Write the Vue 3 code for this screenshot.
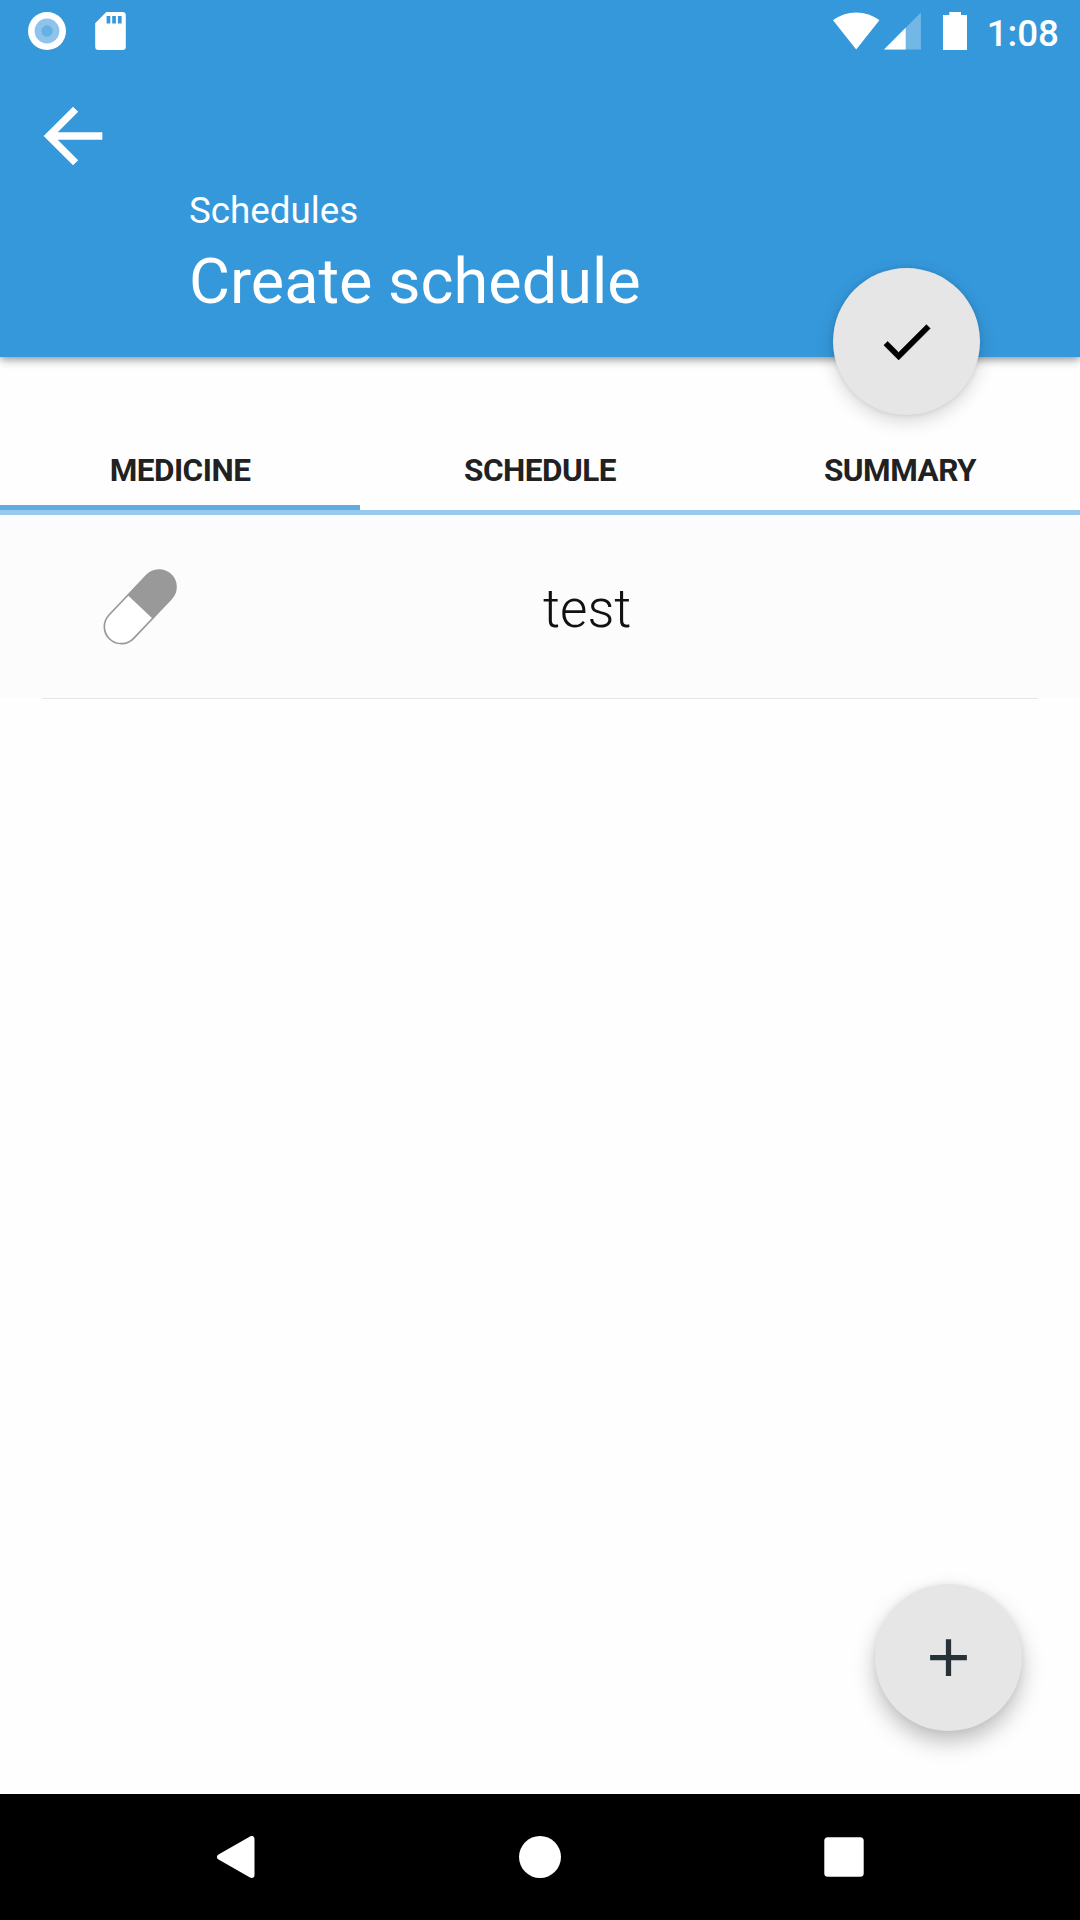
<script setup>
import { ref } from 'vue'

const tabs = ['Medicine', 'Schedule', 'Summary']
const active = ref(0)
const medicines = ['test']
</script>

<template>
  <div class="screen">
    <header class="appbar">
      <div class="status">
        <div class="status-side">
          <svg class="s-record" width="38" height="38" viewBox="0 0 38 38">
            <circle cx="19" cy="19" r="19" fill="#fff" />
            <circle cx="19" cy="19" r="12.4" fill="#8ec4eb" />
            <circle cx="19" cy="19" r="5.7" fill="#66b0e4" />
          </svg>
          <svg class="s-sd" width="31" height="38" viewBox="0 0 31 38">
            <path d="M11.3 0H27.5a3.3 3.3 0 0 1 3.3 3.3V34.7a3.3 3.3 0 0 1-3.3 3.3H3.5a3.3 3.3 0 0 1-3.3-3.3V11.3z" fill="#fff" />
            <path d="M11.6 4h3.7v7.6h-3.7zM17.2 4h3.7v7.6h-3.7zM22.9 4h3.7v7.6h-3.7z" fill="#3598db" />
          </svg>
        </div>
        <div class="status-side">
          <svg class="s-wifi" width="47" height="38" viewBox="0 0 47 38">
            <path d="M0 8.3C6.5 3.3 14.500 .5 23.200 .5S39.900 3.300 46.400 8.300L23.200 37.500z" fill="#fff" />
          </svg>
          <svg class="s-signal" width="37" height="38" viewBox="0 0 37 38">
            <path d="M36.900 .5V37.500H0z" fill="#fff" opacity=".3" />
            <path d="M21.700 15.700V37.500H0z" fill="#fff" />
          </svg>
          <svg class="s-battery" width="24" height="38" viewBox="0 0 24 38">
            <path d="M6.300 0H18V3H24V38H0V3H6.300z" fill="#fff" />
          </svg>
          <span class="clock">1:08</span>
        </div>
      </div>
      <svg class="back" width="88" height="88" viewBox="0 0 24 24">
        <path d="M20 11H7.830l5.590-5.590L12 4l-8 8 8 8 1.410-1.410L7.830 13H20v-2z" fill="#fff" />
      </svg>
      <div class="subtitle">Schedules</div>
      <h1 class="title">Create schedule</h1>
      <button class="fab fab-done" aria-label="Done">
        <svg width="63" height="63" viewBox="0 0 24 24">
          <path d="M9 16.170L4.830 12l-1.420 1.410L9 19 21 7l-1.410-1.410z" fill="#000" stroke="#000" stroke-width=".25" />
        </svg>
      </button>
    </header>

    <nav class="tabs">
      <button
        v-for="(tab, i) in tabs"
        :key="tab"
        class="tab"
        :class="{ active: i === active }"
        @click="active = i"
      >{{ tab }}</button>
    </nav>

    <main class="content">
      <div v-for="name in medicines" :key="name" class="row">
        <svg class="pill" width="130" height="110" viewBox="0 0 390 330">
          <g transform="translate(180.500 170.500) rotate(-46.500)">
            <rect x="-133" y="-51" width="266" height="102" rx="51" fill="#fff" stroke="#999" stroke-width="5" />
            <path d="M0-51H82a51 51 0 0 1 0 102H0z" fill="#999" />
          </g>
        </svg>
        <span class="name">{{ name }}</span>
      </div>
      <button class="fab fab-add" aria-label="Add">
        <svg width="63" height="63" viewBox="0 0 24 24">
          <path d="M19 13h-6v6h-2v-6H5v-2h6V5h2v6h6v2z" fill="#263238" />
        </svg>
      </button>
    </main>

    <footer class="navbar">
      <svg width="42" height="42" viewBox="0 0 42 42">
        <path d="M5 21L36.500 3V39z" fill="#fff" stroke="#fff" stroke-width="6" stroke-linejoin="round" />
      </svg>
      <svg width="42" height="42" viewBox="0 0 42 42"><circle cx="21" cy="21" r="21" fill="#fff" /></svg>
      <svg width="42" height="42" viewBox="0 0 42 42"><rect x="1.300" y="1.300" width="39.400" height="39.400" rx="3.500" fill="#fff" /></svg>
    </footer>
  </div>
</template>

<style>
body { background: #fefefe; }
</style>

<style scoped>
.screen {
  width: 1080px;
  height: 1920px;
  display: flex;
  flex-direction: column;
  overflow: hidden;
  background: #fefefe;
  font-family: Roboto, sans-serif;
}
svg { display: block; flex: none; }
button { border: 0; padding: 0; margin: 0; font-family: inherit; }

.appbar {
  position: relative;
  z-index: 1;
  flex: none;
  height: 357px;
  background: #3598db;
  color: #fff;
  box-shadow: 0 2px 9px rgba(0, 0, 0, .48);
}
.status {
  height: 63px;
  padding: 0 21px 0 28px;
  display: flex;
  justify-content: space-between;
}
.status-side { display: flex; align-items: flex-start; padding-top: 12px; }
.s-record { margin-left: .4px; }
.s-sd { margin-left: 28.6px; }
.s-signal { margin-left: 4px; }
.s-battery { margin-left: 22px; }
.clock {
  margin-left: 20px;
  font-size: 36.75px;
  font-weight: 500;
  line-height: 43px;
}
.back { margin: 29px 0 0 29px; }
.subtitle {
  margin: 9px 0 0 189px;
  font-size: 36.75px;
  line-height: 44px;
}
.title {
  margin: 12px 0 0 189px;
  font-size: 63px;
  font-weight: 400;
  line-height: 74px;
}

.fab {
  position: absolute;
  width: 147px;
  height: 147px;
  border-radius: 50%;
  background: #e6e6e6;
  display: flex;
  align-items: center;
  justify-content: center;
}
.fab-done {
  left: 833px;
  top: 267.500px;
  box-shadow: 0 6px 18px rgba(0, 0, 0, .16), 0 0 5px rgba(0, 0, 0, .1);
}
.fab-add {
  right: 58px;
  bottom: 63px;
  box-shadow: 0 11px 22px rgba(0, 0, 0, .25), 0 0 6px rgba(0, 0, 0, .06);
}
.fab-add svg { margin: -1px 0 0 -1px; }

.tabs {
  flex: none;
  height: 158px;
  box-sizing: border-box;
  padding-top: 74px;
  border-bottom: 5px solid #99caed;
  display: flex;
}
.tab {
  flex: 1;
  padding-top: 5px;
  border-bottom: 5px solid transparent;
  background: none;
  color: #212121;
  font-size: 31.5px;
  font-weight: 700;
  letter-spacing: -.5px;
  text-transform: uppercase;
}
.tab.active { border-bottom-color: #5dace2; }

.content { position: relative; flex: 1; }
.row {
  height: 184px;
  display: flex;
  align-items: center;
  padding-left: 80px;
  background:
    linear-gradient(#e6e6e6, #e6e6e6) 42px 100% / 996px 1px no-repeat,
    linear-gradient(#fcfcfc, #fcfcfc) 0 0 / 100% 183px no-repeat;
}
.pill { margin-top: -4px; }
.name {
  margin: 3px 0 0 333px;
  color: #111;
  font-size: 53px;
  font-weight: 300;
  line-height: 62px;
}

.navbar {
  flex: none;
  height: 126px;
  background: #000;
  display: flex;
  align-items: center;
  justify-content: center;
  gap: 262px;
}
</style>
